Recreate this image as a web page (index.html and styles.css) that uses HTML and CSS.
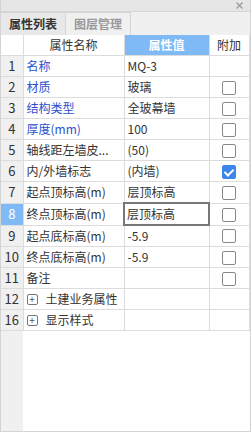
FILE: index.html
```html
<!doctype html>
<html>
	<head>
		<meta charset="utf-8">
		<title>属性列表</title>
		<link rel="stylesheet" href="styles.css">
	</head>
	<body>
		<div class="panel">
			<div class="topbar">
				<svg class="close" width="7" height="7" viewBox="0 0 7 7"><path d="M0.5 0.5 L6.5 6.5 M6.5 0.5 L0.5 6.5" stroke="#9a9a9a" stroke-width="1.2"/></svg>
			</div>
			<div class="tabs">
				<div class="tab active">属性列表</div>
				<div class="tab">图层管理</div>
			</div>
			<div class="grid">
				<table class="props">
					<colgroup>
						<col class="c-num"><col class="c-name"><col class="c-val"><col class="c-add">
					</colgroup>
					<tr class="head">
						<td class="num"></td>
						<td class="center">属性名称</td>
						<td class="center sel">属性值</td>
						<td class="center">附加</td>
					</tr>
					<tr><td class="num">1</td><td class="blue">名称</td><td>MQ-3</td><td></td></tr>
					<tr><td class="num">2</td><td class="blue">材质</td><td>玻璃</td><td class="center"><span class="cb"></span></td></tr>
					<tr><td class="num">3</td><td class="blue">结构类型</td><td>全玻幕墙</td><td class="center"><span class="cb"></span></td></tr>
					<tr><td class="num">4</td><td class="blue">厚度(mm)</td><td>100</td><td class="center"><span class="cb"></span></td></tr>
					<tr><td class="num">5</td><td>轴线距左墙皮...</td><td>(50)</td><td class="center"><span class="cb"></span></td></tr>
					<tr><td class="num">6</td><td>内/外墙标志</td><td>(内墙)</td><td class="center"><span class="cb on"></span></td></tr>
					<tr><td class="num">7</td><td>起点顶标高(m)</td><td>层顶标高</td><td class="center"><span class="cb"></span></td></tr>
					<tr><td class="num cur">8</td><td>终点顶标高(m)</td><td class="edit">层顶标高</td><td class="center"><span class="cb"></span></td></tr>
					<tr><td class="num">9</td><td>起点底标高(m)</td><td>-5.9</td><td class="center"><span class="cb"></span></td></tr>
					<tr><td class="num">10</td><td>终点底标高(m)</td><td>-5.9</td><td class="center"><span class="cb"></span></td></tr>
					<tr><td class="num">11</td><td>备注</td><td></td><td class="center"><span class="cb"></span></td></tr>
					<tr><td class="num">12</td><td><span class="plus">+</span>土建业务属性</td><td></td><td></td></tr>
					<tr><td class="num">16</td><td><span class="plus">+</span>显示样式</td><td></td><td></td></tr>
				</table>
				<div class="filler"><div class="gutter"></div></div>
			</div>
		</div>
	</body>
</html>
```

FILE: styles.css
```css
html, body
{
	margin: 0;
	padding: 0;
	background: #fff;
}
body
{
	font-family: "Noto Sans CJK SC", "Noto Sans", sans-serif;
	font-size: 12px;
	color: #333;
}
.panel
{
	width: 251px;
	height: 432px;
	box-sizing: border-box;
	border: 1px solid #d4d4d4;
	border-top: 0;
	display: flex;
	flex-direction: column;
	background: #fff;
}
.topbar
{
	height: 11px;
	background: #e6e6e6;
	border-bottom: 1px solid #d6d6d6;
	display: flex;
	justify-content: flex-end;
	align-items: center;
	padding-right: 7px;
}
.close
{
	display: block;
}
.tabs
{
	height: 23px;
	background: #f0f0f0;
	display: flex;
	align-items: stretch;
}
.tab
{
	width: 64px;
	text-align: center;
	line-height: 22px;
	font-size: 12px;
	color: #999;
	border: 1px solid #d4d4d4;
	border-bottom: 0;
	margin-left: -1px;
	background: #f0f0f0;
	font-weight: bold;
}
.tab.active
{
	color: #333;
	background: #e8e8e8;
	border-left: 0;
	margin-left: 0;
}
.grid
{
	flex: 1;
	display: flex;
	flex-direction: column;
}
.props
{
	border-collapse: collapse;
	table-layout: fixed;
	width: 248px;
}
.c-num { width: 22px; }
.c-name { width: 101px; }
.c-val { width: 85px; }
.c-add { width: 40px; }
.props td
{
	border: 1px solid #dcdcdc;
	height: 20px;
	padding: 0 0 0 3px;
	line-height: 20px;
	white-space: nowrap;
	overflow: hidden;
	box-sizing: border-box;
}
.props tr:first-child td
{
	border-top: 0;
}
.props td:first-child
{
	border-left: 0;
}
.props td.num
{
	background: #f0f0f0;
	text-align: center;
	padding: 0;
	color: #333;
	font-size: 13px;
}
.props td.cur
{
	background: #7fbaf7;
	color: #fff;
}
.props td.center
{
	text-align: center;
	padding: 0;
}
.props td.sel
{
	background: #7fbaf7;
	color: #fff;
	font-weight: bold;
}
.head td
{
	background: #fff;
}
.head td.num
{
	background: #fff;
}
.blue
{
	color: #2b4fcf;
}
.props td.edit
{
	border: 2px solid #777;
	padding-left: 2px;
}
.cb
{
	display: inline-block;
	width: 12px;
	height: 12px;
	border: 1px solid #888;
	border-radius: 2px;
	vertical-align: middle;
	background: #fff;
	margin-top: -2px;
	position: relative;
}
.cb.on
{
	background: #3b86e8;
	border-color: #3b86e8;
}
.cb.on::after
{
	content: "";
	position: absolute;
	left: 3px;
	top: 1px;
	width: 4px;
	height: 7px;
	border: solid #fff;
	border-width: 0 2px 2px 0;
	transform: rotate(45deg);
}
.plus
{
	display: inline-block;
	width: 9px;
	height: 9px;
	border: 1px solid #777;
	border-radius: 2px;
	line-height: 8px;
	text-align: center;
	font-size: 10px;
	color: #555;
	margin-right: 8px;
	vertical-align: middle;
	margin-top: -2px;
}
.filler
{
	flex: 1;
	display: flex;
}
.gutter
{
	width: 22px;
	background: #f0f0f0;
}
```
